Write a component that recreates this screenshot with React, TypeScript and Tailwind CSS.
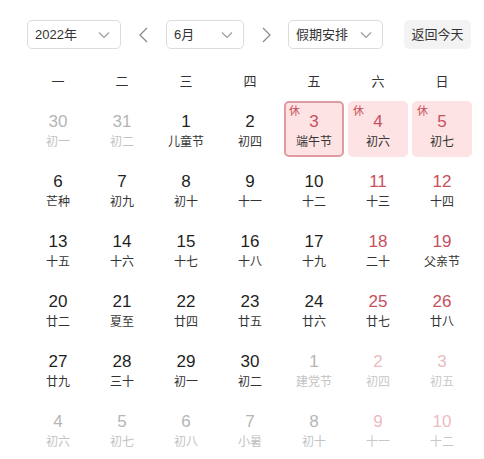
import React from "react";

type Day = { n: number; l: string; other?: boolean; rest?: boolean; sel?: boolean };

const rows: Day[][] = [
  [
    { n: 30, l: "初一", other: true },
    { n: 31, l: "初二", other: true },
    { n: 1, l: "儿童节" },
    { n: 2, l: "初四" },
    { n: 3, l: "端午节", rest: true, sel: true },
    { n: 4, l: "初六", rest: true },
    { n: 5, l: "初七", rest: true },
  ],
  [
    { n: 6, l: "芒种" },
    { n: 7, l: "初九" },
    { n: 8, l: "初十" },
    { n: 9, l: "十一" },
    { n: 10, l: "十二" },
    { n: 11, l: "十三" },
    { n: 12, l: "十四" },
  ],
  [
    { n: 13, l: "十五" },
    { n: 14, l: "十六" },
    { n: 15, l: "十七" },
    { n: 16, l: "十八" },
    { n: 17, l: "十九" },
    { n: 18, l: "二十" },
    { n: 19, l: "父亲节" },
  ],
  [
    { n: 20, l: "廿二" },
    { n: 21, l: "夏至" },
    { n: 22, l: "廿四" },
    { n: 23, l: "廿五" },
    { n: 24, l: "廿六" },
    { n: 25, l: "廿七" },
    { n: 26, l: "廿八" },
  ],
  [
    { n: 27, l: "廿九" },
    { n: 28, l: "三十" },
    { n: 29, l: "初一" },
    { n: 30, l: "初二" },
    { n: 1, l: "建党节", other: true },
    { n: 2, l: "初四", other: true },
    { n: 3, l: "初五", other: true },
  ],
  [
    { n: 4, l: "初六", other: true },
    { n: 5, l: "初七", other: true },
    { n: 6, l: "初八", other: true },
    { n: 7, l: "小暑", other: true },
    { n: 8, l: "初十", other: true },
    { n: 9, l: "十一", other: true },
    { n: 10, l: "十二", other: true },
  ],
];

const Chevron = () => (
  <svg width="12" height="8" viewBox="0 0 12 8" fill="none" stroke="#999" strokeWidth="1.1">
    <path d="M1 1.5 L6 6.5 L11 1.5" />
  </svg>
);

function Select({ label, w }: { label: string; w: string }) {
  return (
    <div className={`${w} h-[29px] flex items-center justify-between pl-[7px] pr-[10px] border border-[#dcdcdc] rounded-[5px] text-[13px] text-[#333]`}>
      <span>{label}</span>
      <Chevron />
    </div>
  );
}

function Arrow({ dir }: { dir: "l" | "r" }) {
  return (
    <svg width="9" height="16" viewBox="0 0 9 16" fill="none" stroke="#888" strokeWidth="1.2">
      <path d={dir === "l" ? "M8 1 L1 8 L8 15" : "M1 1 L8 8 L1 15"} />
    </svg>
  );
}

export default function App() {
  return (
    <div className="w-[484px] h-[459px] bg-white overflow-hidden" style={{ fontFamily: '"Liberation Sans", "Noto Sans CJK SC", sans-serif' }}>
      {/* toolbar */}
      <div className="flex items-center pt-[20px] pl-[27px]">
        <Select label="2022年" w="w-[94px]" />
        <div className="w-[45px] flex justify-center">
          <Arrow dir="l" />
        </div>
        <Select label="6月" w="w-[78px]" />
        <div className="w-[44px] flex justify-center">
          <Arrow dir="r" />
        </div>
        <Select label="假期安排" w="w-[95px]" />
        <div className="ml-[21px] w-[67px] h-[29px] flex items-center justify-center rounded-[5px] bg-[#f3f3f3] text-[13px] text-[#333]">
          返回今天
        </div>
      </div>

      {/* weekday header */}
      <div className="grid grid-cols-7 ml-[26px] w-[448px] mt-[21px] h-[24px] items-center text-[13px] text-[#333]">
        {["一", "二", "三", "四", "五", "六", "日"].map((w) => (
          <div key={w} className="text-center">{w}</div>
        ))}
      </div>

      {/* days */}
      <div className="ml-[26px] w-[448px] mt-[7px] flex flex-col gap-[4px]">
        {rows.map((row, ri) => (
          <div key={ri} className="grid grid-cols-7">
            {row.map((d, ci) => {
              const weekend = ci >= 5;
              let numCls = "text-[#1f1f1f]";
              let lunCls = "text-[#333]";
              if (d.other) {
                numCls = weekend ? "text-[#ebbcc0]" : "text-[#b5b5b5]";
                lunCls = weekend ? "text-[#c8c8c8]" : "text-[#c2c2c2]";
              } else if (weekend || d.rest) {
                numCls = "text-[#c6505e]";
              }
              return (
                <div key={ci} className="px-[2px]">
                  <div
                    className={`relative h-[56px] rounded-[5px] flex flex-col items-center ${
                      d.rest ? "bg-[#fde3e3]" : ""
                    } ${d.sel ? "border-2 border-[#e09aa2]" : ""}`}
                  >
                    {d.rest && (
                      <span className={`absolute ${d.sel ? "top-[2px] left-[3px]" : "top-[4px] left-[5px]"} text-[11px] leading-[12px] text-[#c6505e]`}>
                        休
                      </span>
                    )}
                    <div className={`${d.sel ? "mt-[9px]" : "mt-[11px]"} text-[17px] leading-[20px] ${numCls}`}>{d.n}</div>
                    <div className={`mt-[2px] text-[12px] leading-[16px] ${lunCls}`}>{d.l}</div>
                  </div>
                </div>
              );
            })}
          </div>
        ))}
      </div>
    </div>
  );
}
